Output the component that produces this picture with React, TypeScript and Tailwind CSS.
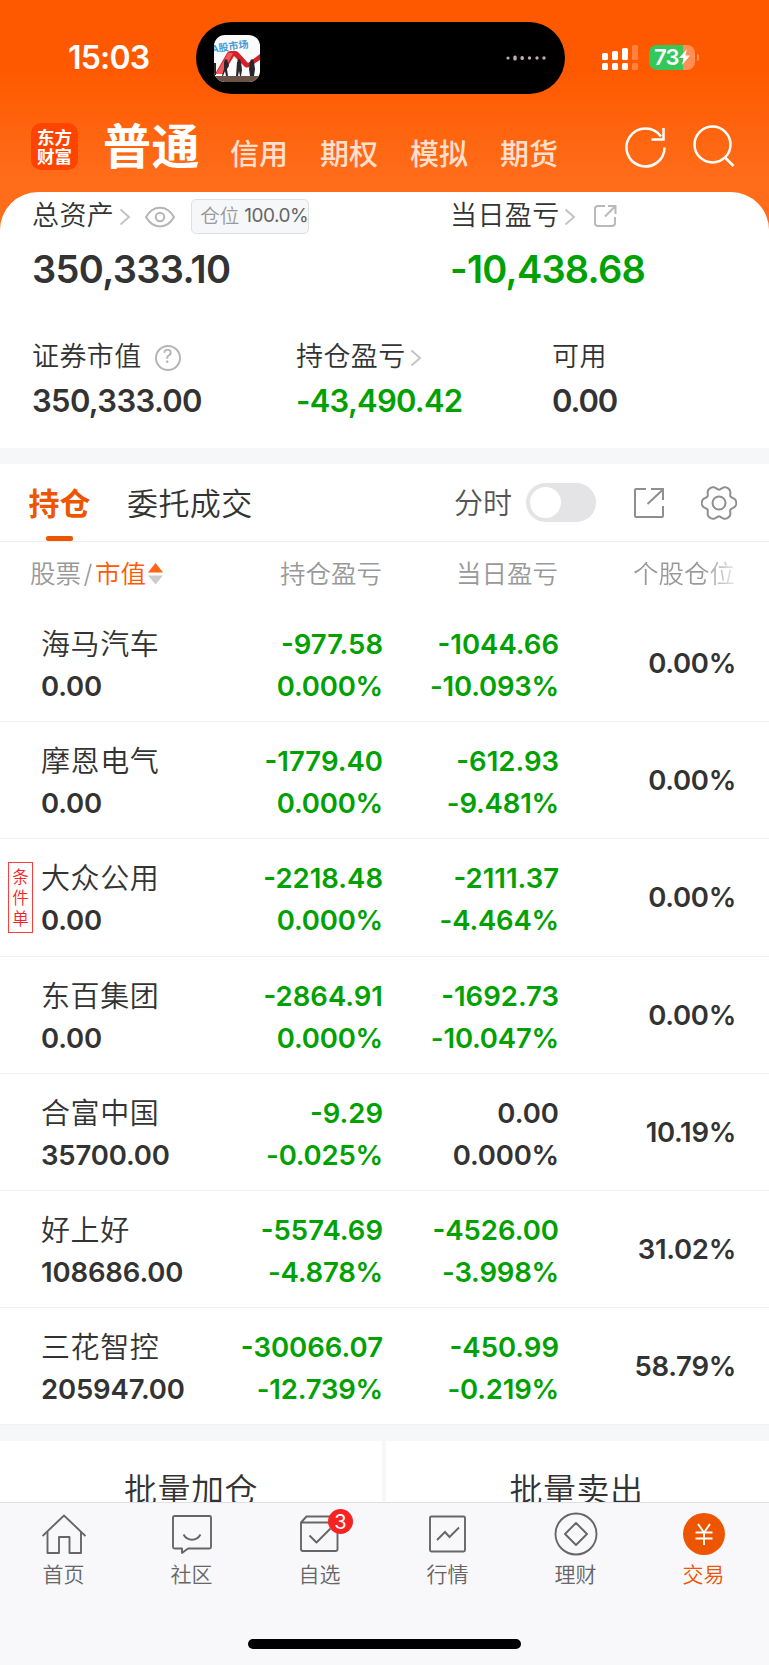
import clsx from 'clsx';
import type { ReactNode } from 'react';

interface Holding {
  name: string;
  value: string;
  profit: [string, string];
  today: [string, string];
  ratio: string;
  tag?: string;
}

const holdings: Holding[] = [
  { name: '海马汽车', value: '0.00', profit: ['-977.58', '0.000%'], today: ['-1044.66', '-10.093%'], ratio: '0.00%' },
  { name: '摩恩电气', value: '0.00', profit: ['-1779.40', '0.000%'], today: ['-612.93', '-9.481%'], ratio: '0.00%' },
  { name: '大众公用', value: '0.00', profit: ['-2218.48', '0.000%'], today: ['-2111.37', '-4.464%'], ratio: '0.00%', tag: '条件单' },
  { name: '东百集团', value: '0.00', profit: ['-2864.91', '0.000%'], today: ['-1692.73', '-10.047%'], ratio: '0.00%' },
  { name: '合富中国', value: '35700.00', profit: ['-9.29', '-0.025%'], today: ['0.00', '0.000%'], ratio: '10.19%' },
  { name: '好上好', value: '108686.00', profit: ['-5574.69', '-4.878%'], today: ['-4526.00', '-3.998%'], ratio: '31.02%' },
  { name: '三花智控', value: '205947.00', profit: ['-30066.07', '-12.739%'], today: ['-450.99', '-0.219%'], ratio: '58.79%' },
];

const accountTabs = ['信用', '期权', '模拟', '期货'];

// Six-lobed outline of the settings icon
const gearPoints = Array.from({ length: 120 }, (_, i) => {
  const a = (i * Math.PI) / 60;
  const r = 15.6 + 2 * Math.cos(6 * a) - 0.35 * Math.cos(12 * a);
  return `${(18 + r * Math.cos(a)).toFixed(2)},${(18 + r * Math.sin(a)).toFixed(2)}`;
}).join(' ');

function Chevron({ className }: { className?: string }) {
  return (
    <svg className={clsx('w-[12px] h-[18px] shrink-0', className)} viewBox="0 0 12 18" fill="none" stroke="#c4c4c4" strokeWidth="2">
      <path d="M1.5 1.5 10 9l-8.5 7.5" />
    </svg>
  );
}

function StatusBar() {
  return (
    <div className="flex h-[94px] pt-[22px] text-white">
      <div className="w-[196px] pl-[68px] h-[72px] flex items-center text-[32px] font-semibold tracking-[-0.8px]">15:03</div>
      <div className="w-[369px] h-[72px] rounded-full bg-black flex items-center justify-between pl-[18px] pr-[19px]">
        <svg className="w-[46px] h-[47px] rounded-[11px]" viewBox="0 0 46 47">
          <rect width="46" height="47" fill="#fbfbfb" />
          <text x="-3" y="16" fontSize="10" fontWeight="700" fill="#4a9bd4" transform="rotate(-8 10 12)">A股市场</text>
          <path d="M1 39 13 18q1-2 4-2h4q2 0 3 1l10 11 12-9v6L35 32q-2 1-4 0L20 21 9 39z" fill="#d5202c" />
          <path d="M2 39 14 18h5L8 39z" fill="#ef5a5c" />
          <g fill="#26262b">
            <path d="M0 28h2v12H0zM10 27h4l1 4-2 3 1 7h-2l-1-5-2 5H8l2-7zM23 27h4l1 8-1 6h-1l-1-5-1 5h-2zM36 27h4l1 7-1 7h-4l-1-7z" />
            <circle cx="12" cy="26" r="1.7" />
            <circle cx="25" cy="26" r="1.7" />
            <circle cx="38" cy="26" r="1.7" />
          </g>
          <rect y="41" width="46" height="6" fill="#6b5348" />
        </svg>
        <svg className="w-[40px] h-[8px]" viewBox="0 0 40 8" fill="#c4a9ad">
          <circle cx="2" cy="4" r="1.6" />
          <rect x="7.3" y="1.5" width="3.4" height="5" rx="1.5" />
          <rect x="14.5" y="2" width="3.4" height="4" rx="1.5" />
          <circle cx="23.5" cy="4" r="1.7" />
          <circle cx="31" cy="4" r="1.7" />
          <circle cx="38" cy="4" r="1.7" />
        </svg>
      </div>
      <svg className="w-[36px] h-[25px] mt-[23px] ml-[37px]" viewBox="0 0 36 25" fill="#fff">
        <rect y="8" width="6" height="7" rx="1.5" />
        <rect x="10" y="6" width="6" height="9" rx="1.5" />
        <rect x="20" y="3" width="6" height="12" rx="1.5" />
        <rect x="30" width="6" height="15" rx="1.5" opacity=".25" />
        <rect y="18" width="6" height="7" rx="1.5" />
        <rect x="10" y="18" width="6" height="7" rx="1.5" />
        <rect x="20" y="18" width="6" height="7" rx="1.5" />
        <rect x="30" y="18" width="6" height="7" rx="1.5" opacity=".25" />
      </svg>
      <div className="flex items-center h-[25px] mt-[22.5px] ml-[11px]">
        <div className="w-[46px] h-[25px] rounded-[8px] bg-[linear-gradient(90deg,#34c759_34px,#ff8f55_34px)] flex items-center pl-[5px]">
          <span className="text-[22px] leading-none font-semibold tracking-[-0.7px]">73</span>
          <svg className="w-[11px] h-[16px] shrink-0" viewBox="0 0 11 16" fill="#fff">
            <path d="M8 0 0 9h4.5L3 16l8-9.5H6.3z" />
          </svg>
        </div>
        <div className="w-[2px] h-[7px] ml-[2px] rounded-r-full bg-[#ff8f55]" />
      </div>
    </div>
  );
}

function Header() {
  return (
    <div className="flex h-[98px] text-white">
      <div className="w-[47px] h-[47px] mt-[29px] ml-[31px] rounded-[10px] bg-[#ff4300] text-[17.5px] leading-[19px] font-bold flex flex-col items-center justify-center">
        <span>东方</span>
        <span>财富</span>
      </div>
      <div className="w-[98px] ml-[25px] mt-[18px] text-[48px] leading-[70px] font-bold tracking-[0.5px] whitespace-nowrap">普通</div>
      <div className="flex gap-[32px] ml-[29px] mt-[41px] text-[29px] leading-[40px] font-medium text-[#ffe0cf]">
        {accountTabs.map((tab) => (
          <span key={tab} className="w-[58px]">{tab}</span>
        ))}
      </div>
      <svg className="w-[42px] h-[42px] mt-[32px] ml-[67px]" viewBox="0 0 42 42" fill="none" stroke="#fff" strokeWidth="2.5">
        <path d="M39.5 21.5A19 19 0 1 1 36 10.5" />
        <path d="M38.5 2v11.5H26.5" />
      </svg>
      <svg className="w-[42px] h-[42px] mt-[31px] ml-[26px]" viewBox="0 0 42 42" fill="none" stroke="#fff" strokeWidth="2.5">
        <circle cx="19.5" cy="19.5" r="18" />
        <path d="m31.5 32 9 9" />
      </svg>
    </div>
  );
}

function Summary() {
  return (
    <div className="h-[256px] rounded-t-[38px] bg-white text-[#333]">
      <div className="flex h-[149px]">
        <div className="w-[418px] pl-[32px]">
          <div className="flex items-center h-[49px] text-[27px] font-[350] tracking-[0.4px]">
            总资产
            <Chevron className="ml-[5px]" />
            <svg className="w-[30px] h-[22px] ml-[14px]" viewBox="0 0 30 22" fill="none" stroke="#b5b5b5" strokeWidth="2">
              <path d="M1 11C8-1.5 22-1.5 29 11 22 23.5 8 23.5 1 11z" />
              <circle cx="15" cy="11" r="4.2" />
            </svg>
            <div className="flex items-center w-[118px] h-[35px] ml-[16px] pl-[8px] rounded-[5px] border border-[#dfe0e4] bg-[#f6f7f9] text-[19.5px] tracking-normal whitespace-nowrap text-[#999]">
              仓位<span className="ml-[5px] text-[19px] text-[#666] font-normal tracking-[-0.5px]">100.0%</span>
            </div>
          </div>
          <div className="pt-[5px] text-[38px] leading-[46px] font-semibold tracking-[-0.65px]">350,333.10</div>
        </div>
        <div className="pl-[32px]">
          <div className="flex items-center h-[49px] text-[27px] font-[350] tracking-[0.4px]">
            当日盈亏
            <Chevron className="ml-[4px]" />
            <svg className="w-[23px] h-[23px] ml-[18px]" viewBox="0 0 23 23" fill="none" stroke="#b9b9b9" strokeWidth="2">
              <path d="M11 1H4a3 3 0 0 0-3 3v14a3 3 0 0 0 3 3h14a3 3 0 0 0 3-3v-6" />
              <path d="M11 11.5 21 1.5M14 1h7.5v8" />
            </svg>
          </div>
          <div className="pt-[5px] text-[38px] leading-[46px] font-semibold tracking-[-0.75px] text-[#00a100]">-10,438.68</div>
        </div>
      </div>
      <div className="flex">
        <div className="w-[264px] pl-[32px]">
          <div className="flex items-center h-[33px] text-[27px] font-[350] tracking-[0.4px]">
            证券市值
            <div className="w-[26px] h-[26px] ml-[13px] rounded-full border-2 border-[#b5b5b5] flex items-center justify-center text-[19px] tracking-normal font-normal text-[#b0b0b0]">?</div>
          </div>
          <div className="pt-[6px] text-[31px] leading-[42px] font-semibold tracking-[-0.65px]">350,333.00</div>
        </div>
        <div className="w-[256px] pl-[32px]">
          <div className="flex items-center h-[33px] text-[27px] font-[350] tracking-[0.4px]">
            持仓盈亏
            <Chevron className="ml-[4px]" />
          </div>
          <div className="pt-[6px] text-[31px] leading-[42px] font-semibold tracking-[-0.75px] text-[#00a100]">-43,490.42</div>
        </div>
        <div className="pl-[32px]">
          <div className="flex items-center h-[33px] text-[27px] font-[350] tracking-[0.4px]">可用</div>
          <div className="pt-[6px] text-[31px] leading-[42px] font-semibold tracking-[-1.1px]">0.00</div>
        </div>
      </div>
    </div>
  );
}

function HoldingTabs() {
  return (
    <div className="flex h-[78px] border-b border-[#eeeeee] bg-white">
      <div className="flex flex-col items-center justify-between ml-[28px] w-[63px]">
        <span className="pt-[17px] text-[31px] leading-[46px] font-bold text-[#ee5500]">持仓</span>
        <span className="w-[27px] h-[5px] rounded-[2px] bg-[#ee5500]" />
      </div>
      <div className="ml-[36px] pt-[17px] w-[327px] text-[31px] leading-[46px] font-[350] tracking-[0.4px] text-[#333]">委托成交</div>
      <div className="pt-[18px] w-[72px] text-[29px] leading-[44px] font-[350] text-[#555]">分时</div>
      <div className="w-[70px] h-[39px] mt-[19px] p-[4px] rounded-full bg-[#e4e4e6]">
        <div className="w-[31px] h-[31px] rounded-full bg-white" />
      </div>
      <svg className="w-[31px] h-[31px] mt-[24px] ml-[38px]" viewBox="0 0 31 31" fill="none" stroke="#8f8f8f" strokeWidth="2">
        <path d="M12 1H2a1 1 0 0 0-1 1v26a1 1 0 0 0 1 1h26a1 1 0 0 0 1-1V18" />
        <path d="M13.5 16 29 1.5M17 1h12v11" />
      </svg>
      <svg className="w-[36px] h-[36px] mt-[21px] ml-[36px]" viewBox="0 0 36 36" fill="none" stroke="#8f8f8f" strokeWidth="2">
        <polygon points={gearPoints} />
        <circle cx="18" cy="18" r="6.5" />
      </svg>
    </div>
  );
}

function Amounts({ values }: { values: [string, string] }) {
  const negative = values.some((v) => v.startsWith('-'));
  return (
    <div className={clsx('flex flex-col items-end leading-[42px] pt-[18px]', negative && 'text-[#00a100]')}>
      <span>{values[0]}</span>
      <span className="tracking-[-0.2px]">{values[1]}</span>
    </div>
  );
}

function HoldingRow({ item }: { item: Holding }) {
  return (
    <div className="grid grid-cols-[41px_159px_183px_176px_177px] h-[117.2px] border-b border-[#f1f1f2] text-[27.5px] font-semibold text-[#333]">
      <div className="pl-[8px] pt-[23px]">
        {item.tag && (
          <div className="w-[25px] h-[71px] pt-[2px] border border-[#ff3b3b] flex flex-col items-center justify-center text-[16.5px] leading-[21px] font-[350] text-[#f22]">
            {item.tag.split('').map((ch) => (
              <span key={ch}>{ch}</span>
            ))}
          </div>
        )}
      </div>
      <div className="pt-[19px]">
        <div className="text-[29px] leading-[42px] font-[350] tracking-[0.6px]">{item.name}</div>
        <div className="leading-[41px] tracking-[-0.15px]">{item.value}</div>
      </div>
      <Amounts values={item.profit} />
      <Amounts values={item.today} />
      <div className="pt-[37px] leading-[42px] tracking-[-0.3px] text-right">{item.ratio}</div>
    </div>
  );
}

function HoldingTable() {
  return (
    <div className="bg-white">
      <div className="grid grid-cols-[200px_182px_176px_177px] h-[63px] text-[25.5px] leading-[63px] font-[350] text-[#999] text-right">
        <div className="flex items-center pl-[30px]">
          股票<span className="w-[14px] text-center">/</span>
          <span className="text-[#ff5a00]">市值</span>
          <svg className="w-[15px] h-[22px] ml-[2px]" viewBox="0 0 15 22">
            <path d="M7.5 0 15 9.5H0z" fill="#ff6412" />
            <path d="M7.5 21.5 0 12.5h15z" fill="#ccc" />
          </svg>
        </div>
        <div>持仓盈亏</div>
        <div>当日盈亏</div>
        <div className="bg-[linear-gradient(90deg,#999_145px,#e8e8e8_100%)] bg-clip-text text-transparent">个股仓位</div>
      </div>
      {holdings.map((item) => (
        <HoldingRow key={item.name} item={item} />
      ))}
    </div>
  );
}

function NavItem({ label, active, children }: { label: string; active?: boolean; children: ReactNode }) {
  return (
    <div className={clsx('w-[128px] flex flex-col items-center pt-[9px]', active ? 'text-[#ee5500]' : 'text-[#666]')}>
      <div className="relative w-[44px] h-[44px]">{children}</div>
      <span className="mt-[4px] mr-[1px] text-[21px] leading-[30px] font-[350]">{label}</span>
    </div>
  );
}

function BottomNav() {
  const icon = 'w-[44px] h-[44px]';
  return (
    <div className="h-[163px] border-t border-[#e0e0e4] bg-[#f8f8fb]">
      <div className="flex h-[136px]">
        <NavItem label="首页">
          <svg className={icon} viewBox="0 0 44 44" fill="none" stroke="currentColor" strokeWidth="1.9">
            <path d="M.5 24 22 3.5 43.5 24" />
            <path d="M5.5 20v21H17V25h10.500v16H39V20" strokeLinejoin="round" />
          </svg>
        </NavItem>
        <NavItem label="社区">
          <svg className={icon} viewBox="0 0 44 44" fill="none" stroke="currentColor" strokeWidth="1.9" strokeLinejoin="round">
            <path d="M4.5 4h35A1.5 1.5 0 0 1 41 5.5V35a1.5 1.5 0 0 1-1.5 1.5H18L12 41v-4.5H4.5A1.5 1.5 0 0 1 3 35V5.5A1.5 1.5 0 0 1 4.5 4z" />
            <path d="M13.5 22.5c4 7 13 7 17 0" />
          </svg>
        </NavItem>
        <NavItem label="自选">
          <svg className={icon} viewBox="0 0 44 44" fill="none" stroke="currentColor" strokeWidth="1.9" strokeLinejoin="round">
            <path d="M3 10.5 8.5 4.5H33M3 10.5h36.500V37a2 2 0 0 1-2 2H5a2 2 0 0 1-2-2z" />
            <path d="m11.5 23.5 7 7 14-14" />
          </svg>
          <span className="absolute left-[30px] top-[-3px] w-[25px] h-[25px] rounded-full bg-[#f72323] text-white text-[20px] leading-[26px] text-center">3</span>
        </NavItem>
        <NavItem label="行情">
          <svg className={icon} viewBox="0 0 44 44" fill="none" stroke="currentColor" strokeWidth="1.9">
            <rect x="4" y="4.5" width="35" height="35" rx="1.5" />
            <path d="m11 28 8-8 4.500 5 9.500-9.500" />
          </svg>
        </NavItem>
        <NavItem label="理财">
          <svg className={icon} viewBox="0 0 44 44" fill="none" stroke="currentColor" strokeWidth="1.9" strokeLinejoin="round">
            <circle cx="22" cy="22" r="20.5" />
            <path d="m22 11 11 11-11 11-11-11z" />
          </svg>
        </NavItem>
        <NavItem label="交易" active>
          <svg className={icon} viewBox="0 0 44 44" fill="none" stroke="#fff" strokeWidth="1.9">
            <circle cx="22" cy="22" r="21" fill="#ee5500" stroke="none" />
            <path d="m16 12 6 8.5 6-8.5M22 20v13M13.5 20.5h17M13.5 26.5h17" />
          </svg>
        </NavItem>
      </div>
      <div className="w-[273px] h-[10px] mx-auto rounded-full bg-black" />
    </div>
  );
}

export default function App() {
  return (
    <div className="w-[769px] h-[1665px] overflow-hidden bg-white font-['Inter','Noto_Sans_CJK_SC',sans-serif]">
      <div className="h-[448px] bg-[linear-gradient(180deg,#ff5900_70px,#ff6d1a_180px)]">
        <StatusBar />
        <Header />
        <Summary />
      </div>
      <div className="h-[16px] bg-[#f6f7f9]" />
      <HoldingTabs />
      <HoldingTable />
      <div className="flex gap-[4px] h-[76.6px] pt-[15.6px] overflow-hidden bg-[#f6f7f9] text-[33px] leading-[48px] font-[350] tracking-[0.5px] text-[#333] text-center">
        <div className="w-[382px] bg-white pt-[25px]">批量加仓</div>
        <div className="w-[383px] bg-white pt-[25px] pr-[2px]">批量卖出</div>
      </div>
      <BottomNav />
    </div>
  );
}
